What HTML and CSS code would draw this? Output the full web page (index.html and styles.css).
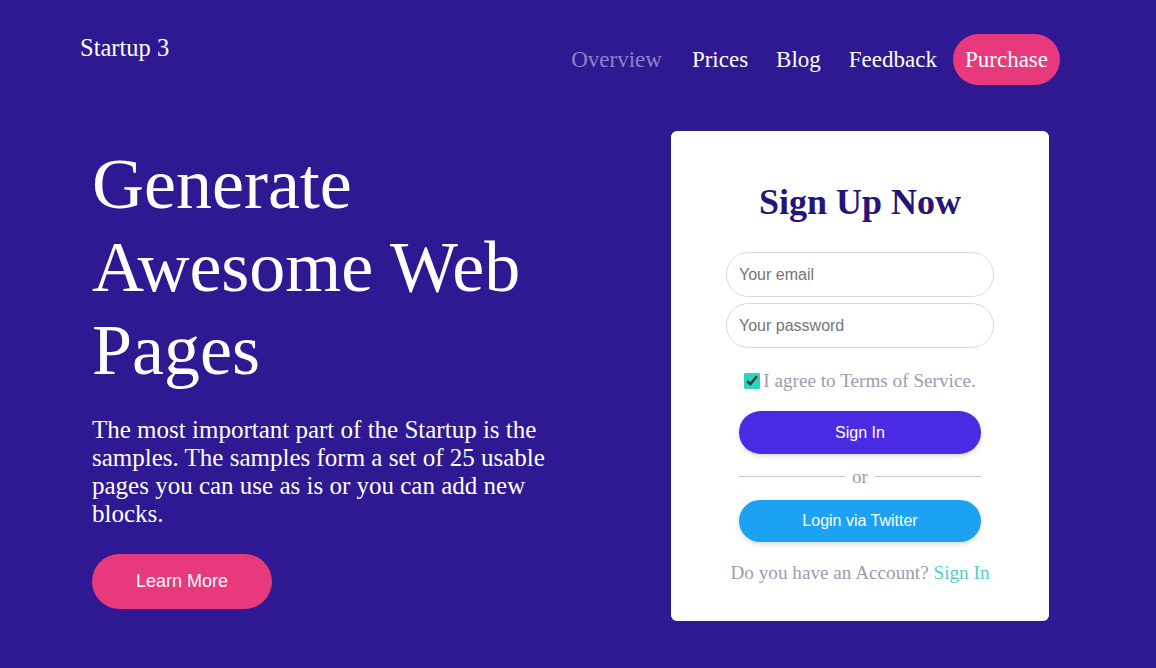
FILE: index.html
```html
<!DOCTYPE html>
<html lang="en">
<head>
<meta charset="utf-8">
<title>Startup 3</title>
<link rel="stylesheet" href="styles.css">
</head>
<body>
<header class="header">
  <div class="logo">Startup 3</div>
  <nav class="nav">
    <a class="nav-link muted" href="#">Overview</a>
    <a class="nav-link" href="#">Prices</a>
    <a class="nav-link" href="#">Blog</a>
    <a class="nav-link" href="#">Feedback</a>
    <a class="nav-link purchase" href="#">Purchase</a>
  </nav>
</header>
<main class="hero">
  <section class="intro">
    <h1 class="title">Generate Awesome Web Pages</h1>
    <p class="lead">The most important part of the Startup is the samples. The samples form a set of 25 usable pages you can use as is or you can add new blocks.</p>
    <a class="learn" href="#">Learn More</a>
  </section>
  <form class="card">
    <h2 class="card-title">Sign Up Now</h2>
    <input class="field" type="email" placeholder="Your email">
    <input class="field field-2" type="password" placeholder="Your password">
    <label class="agree"><input class="check" type="checkbox" checked>I agree to Terms of Service.</label>
    <button class="btn btn-signin" type="button">Sign In</button>
    <div class="divider"><span class="line"></span><span class="or">or</span><span class="line"></span></div>
    <button class="btn btn-twitter" type="button">Login via Twitter</button>
    <p class="account">Do you have an Account? <a class="account-link" href="#">Sign In</a></p>
  </form>
</main>
</body>
</html>
```
FILE: styles.css
```css
html, body {
  margin: 0;
  padding: 0;
}
body {
  background: #2e1992;
  font-family: "Liberation Serif", "Times New Roman", serif;
  color: #fff;
  width: 1156px;
  height: 668px;
  overflow: hidden;
}
.header {
  display: flex;
  justify-content: space-between;
  align-items: flex-start;
  padding: 34px 0 0 80px;
  width: 980px;
}
.logo {
  font-size: 24.5px;
  line-height: 28px;
}
.nav {
  display: flex;
  gap: 4px;
}
.nav-link {
  color: #fff;
  text-decoration: none;
  font-size: 23px;
  line-height: 26px;
  padding: 13px 12px 12px;
  border-radius: 26px;
}
.nav-link.muted {
  color: #8b80cc;
  margin-right: 2px;
}
.nav-link.purchase {
  background: #e8397d;
}
.hero {
  display: flex;
  justify-content: space-between;
  align-items: flex-start;
  margin-top: 46px;
  margin-left: 92px;
  width: 957px;
}
.intro {
  width: 470px;
  padding-top: 12px;
}
.title {
  margin: 0;
  font-size: 72px;
  font-weight: normal;
  line-height: 83px;
}
.lead {
  margin: 24px 0 0;
  font-size: 25px;
  line-height: 28px;
}
.learn {
  display: inline-block;
  margin-top: 26px;
  height: 55px;
  line-height: 55px;
  padding: 0 44px;
  border-radius: 28px;
  background: #e8397d;
  color: #fff;
  text-decoration: none;
  font-family: "Liberation Sans", Arial, sans-serif;
  font-size: 18px;
}
.card {
  box-sizing: border-box;
  width: 378px;
  height: 490px;
  background: #fff;
  border-radius: 6px;
  padding: 51px 0 0;
  display: flex;
  flex-direction: column;
  align-items: center;
}
.card-title {
  margin: 0;
  font-size: 36px;
  line-height: 41px;
  font-weight: bold;
  color: #25157a;
}
.field {
  box-sizing: border-box;
  width: 268px;
  height: 45px;
  margin-top: 29px;
  border: 1px solid #dadada;
  border-radius: 23px;
  padding: 0 12px;
  font-family: "Liberation Sans", Arial, sans-serif;
  font-size: 16px;
  color: #333;
  outline: none;
}
.field::placeholder {
  color: #757575;
}
.field-2 {
  margin-top: 6px;
}
.agree {
  display: flex;
  align-items: center;
  margin-top: 22px;
  font-size: 19.2px;
  line-height: 21px;
  color: #9e9bb0;
}
.check {
  width: 16px;
  height: 16px;
  margin: 0 3px 0 0;
  accent-color: #2dd4bf;
}
.btn {
  width: 242px;
  height: 43px;
  border: 0;
  border-radius: 22px;
  color: #fff;
  font-family: "Liberation Sans", Arial, sans-serif;
  font-size: 16px;
  box-shadow: 0 2px 5px rgba(0, 0, 0, 0.15);
}
.btn-signin {
  margin-top: 20px;
  background: #4b2ae3;
}
.divider {
  display: flex;
  align-items: center;
  width: 242px;
  margin-top: 12px;
  gap: 7px;
}
.line {
  flex: 1;
  height: 1px;
  background: #cfcfcf;
}
.or {
  font-size: 19.2px;
  line-height: 21px;
  color: #9e9bb0;
}
.btn-twitter {
  margin-top: 13px;
  height: 42px;
  background: #1da1f2;
}
.account {
  margin: 20px 0 0;
  font-size: 19.2px;
  line-height: 21px;
  color: #9e9bb0;
}
.account-link {
  color: #4fd1c5;
  text-decoration: none;
}
```
